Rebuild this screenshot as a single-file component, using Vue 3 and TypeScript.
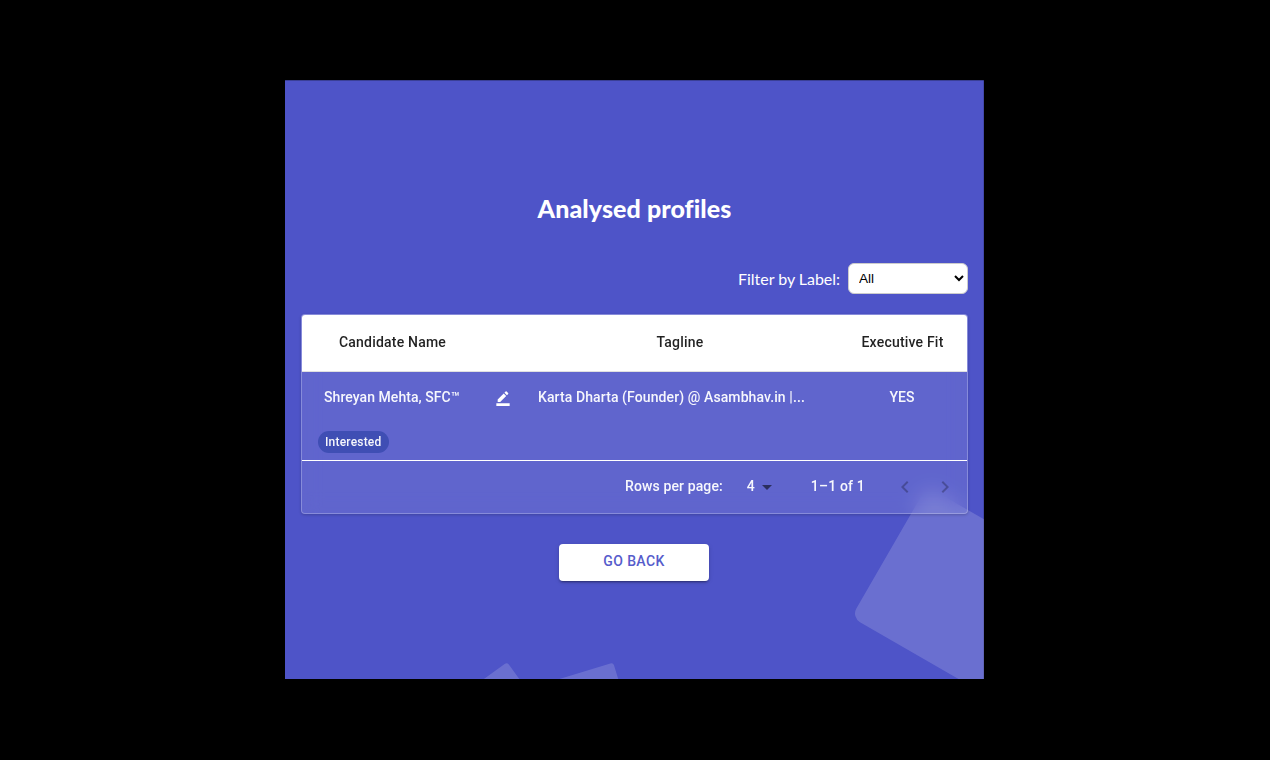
<script setup lang="ts">
interface Row { name: string; tagline: string; fit: string; label: string }
const rows: Row[] = [
  { name: 'Shreyan Mehta, SFC™', tagline: 'Karta Dharta (Founder) @ Asambhav.in |...', fit: 'YES', label: 'Interested' },
]
</script>

<template>
  <div class="screen">
    <main class="panel">
      <span class="shape shape-big"></span>
      <span class="shape shape-a"></span>
      <span class="shape shape-b"></span>

      <h1 class="title">Analysed profiles</h1>

      <div class="filter">
        <label class="filter-label" for="label-filter">Filter by Label:</label>
        <select id="label-filter" class="filter-select">
          <option>All</option>
          <option>Interested</option>
        </select>
      </div>

      <section class="table">
        <div class="thead">
          <div class="th th-name">Candidate Name</div>
          <div class="th th-center">Tagline</div>
          <div class="th th-center">Executive Fit</div>
        </div>
        <div v-for="r in rows" :key="r.name" class="row">
          <div class="name-cell">
            <span class="name">{{ r.name }}</span>
            <svg class="pencil" viewBox="0 0 24 24" width="16" height="16" aria-hidden="true">
              <path fill="#fff" d="M22 24H2v-4h20v4zM13.06 5.19l3.75 3.75L7.75 18H4v-3.75l9.06-9.06zm4.82 2.68-3.75-3.75 1.83-1.83c.39-.39 1.02-.39 1.41 0l2.34 2.34c.39.39.39 1.02 0 1.41l-1.83 1.83z" />
            </svg>
          </div>
          <div class="tagline">{{ r.tagline }}</div>
          <div class="fit">{{ r.fit }}</div>
          <div class="chip-wrap"><span class="chip">{{ r.label }}</span></div>
        </div>
        <div class="pager">
          <span class="pager-text">Rows per page:</span>
          <span class="per-page"><span class="pager-text">4</span>
            <svg viewBox="0 0 24 24" width="24" height="24" aria-hidden="true"><path d="M7 10l5 5 5-5z" fill="rgba(0,0,0,.54)" /></svg>
          </span>
          <span class="range pager-text">1–1 of 1</span>
          <span class="nav">
            <svg viewBox="0 0 24 24" width="24" height="24" aria-hidden="true"><path d="M15.41 7.41 14 6l-6 6 6 6 1.41-1.41L10.83 12z" fill="rgba(0,0,0,.26)" /></svg>
            <svg viewBox="0 0 24 24" width="24" height="24" aria-hidden="true"><path d="M10 6 8.59 7.41 13.17 12l-4.58 4.59L10 18l6-6z" fill="rgba(0,0,0,.26)" /></svg>
          </span>
        </div>
      </section>

      <button class="back" type="button">Go Back</button>
    </main>
  </div>
</template>

<style>
html, body { margin: 0; background: #000; }
</style>

<style scoped>
.screen {
  width: 1270px;
  height: 760px;
  background: #000;
  display: flex;
  align-items: center;
  justify-content: center;
  font-family: Roboto, "Liberation Sans", sans-serif;
  color: #fff;
}
.panel {
  position: relative;
  width: 699px;
  height: 599px;
  margin-left: -1px;
  margin-top: -1px;
  box-sizing: border-box;
  padding: 111px 16px 0;
  background: #4e54c8;
  box-shadow: inset 0 1px 0 rgba(0, 0, 0, 0.25), inset -1px 0 0 rgba(0, 0, 0, 0.15);
  overflow: hidden;
  display: flex;
  flex-direction: column;
  align-items: stretch;
}
.shape {
  position: absolute;
  background: rgba(255, 255, 255, 0.16);
  border-radius: 10px;
}
.shape-big {
  width: 151px;
  height: 151px;
  left: 594px;
  top: 434px;
  transform: rotate(30deg);
}
.shape-a {
  width: 100px;
  height: 100px;
  left: 161px;
  top: 602px;
  border-radius: 3px;
  transform: rotate(54deg);
}
.shape-b {
  width: 100px;
  height: 100px;
  left: 245px;
  top: 595px;
  border-radius: 3px;
  transform: rotate(-17deg);
}
.title {
  position: relative;
  margin: 0;
  font-family: Lato, sans-serif;
  font-size: 25px;
  line-height: 34px;
  font-weight: 900;
  letter-spacing: 0.08px;
  text-align: center;
}
.filter {
  position: relative;
  margin-top: 38px;
  height: 31px;
  display: flex;
  justify-content: flex-end;
  align-items: center;
  gap: 8px;
}
.filter-label {
  font-family: Lato, sans-serif;
  font-size: 16px;
  letter-spacing: -0.03px;
}
.filter-select {
  width: 120px;
  height: 31px;
  padding: 0 6px;
  box-sizing: border-box;
  border: 1px solid #ccc;
  border-radius: 6px;
  background: #fff;
  color: #000;
  font-family: "Liberation Sans", Arial, sans-serif;
  font-size: 13.6px;
}
.table {
  position: relative;
  margin-top: 20px;
  box-sizing: border-box;
  border: 1px solid rgba(255, 255, 255, 0.25);
  border-radius: 4px;
  background: rgba(255, 255, 255, 0.1);
  backdrop-filter: blur(10px);
  box-shadow: 0 1px 3px rgba(0, 0, 0, 0.2);
  overflow: hidden;
  font-size: 14px;
  font-weight: 500;
}
.thead {
  display: grid;
  grid-template-columns: 220px 315px 130px;
  height: 56px;
  align-items: center;
  background: #fff;
  border-bottom: 1px solid #e0e0e0;
  color: rgba(0, 0, 0, 0.87);
}
.th { letter-spacing: 0.2px; padding-bottom: 2px; }
.th-name { padding-left: 37px; }
.th-center { text-align: center; padding-left: 1px; }
.row {
  display: grid;
  grid-template-columns: 220px 315px 130px;
  grid-template-rows: 50px 38px;
  height: 88px;
  border-bottom: 1px solid #fff;
  color: rgba(255, 255, 255, 0.95);
}
.name-cell {
  display: flex;
  align-items: center;
  justify-content: space-between;
  padding: 0 3px 0 22px;
}
.name { letter-spacing: 0.06px; }
.pencil { margin-right: 8.5px; margin-top: 1px; }
.tagline { align-self: center; padding-left: 16px; letter-spacing: 0.1px; }
.fit { align-self: center; text-align: center; }
.chip-wrap {
  grid-column: 1 / -1;
  padding-left: 16px;
  padding-top: 9px;
}
.chip {
  display: inline-block;
  height: 22px;
  line-height: 22px;
  padding: 0 8px 0 7px;
  border-radius: 11px;
  background: #3f4eb4;
  font-size: 12px;
  letter-spacing: 0.2px;
}
.pager {
  height: 52px;
  display: flex;
  align-items: center;
  padding-left: 323px;
  font-size: 14px;
  font-weight: 500;
  color: rgba(255, 255, 255, 0.95);
}
.pager-text { padding-bottom: 2px; letter-spacing: 0.12px; }
.per-page {
  margin-left: 24px;
  display: flex;
  align-items: center;
  width: 64px;
  gap: 0;
}
.range { width: 82px; letter-spacing: 0.17px; }
.nav { display: flex; gap: 16px; }
.back {
  position: relative;
  align-self: center;
  margin-top: 30px;
  margin-right: 1px;
  padding: 0 0 4px;
  width: 150px;
  height: 37px;
  border: 0;
  border-radius: 4px;
  background: #fff;
  color: #565ccb;
  font-family: Roboto, sans-serif;
  font-size: 14px;
  font-weight: 500;
  letter-spacing: 0.4px;
  text-transform: uppercase;
  box-shadow: 0 3px 1px -2px rgba(0,0,0,.2), 0 2px 2px rgba(0,0,0,.14), 0 1px 5px rgba(0,0,0,.12);
}
</style>
